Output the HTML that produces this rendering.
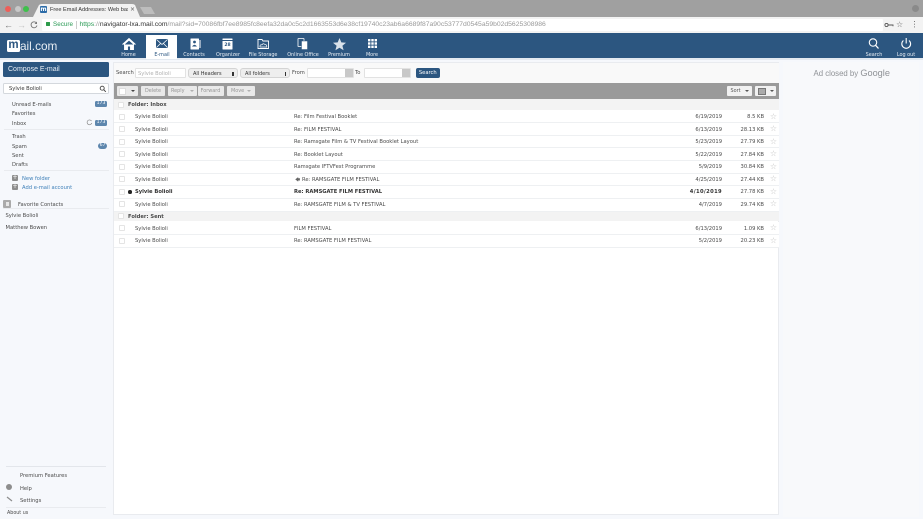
<!DOCTYPE html>
<html><head><meta charset="utf-8"><style>
html,body{margin:0;padding:0;width:923px;height:519px;overflow:hidden;background:#f6f8fc}
body{font-family:"DejaVu Sans","Liberation Sans",sans-serif;font-size:5.2px;color:#4a4a4a;position:relative}
#w{position:absolute;left:0;top:0;width:923px;height:519px;overflow:hidden;filter:blur(.35px)}
.a{position:absolute;white-space:nowrap}
.l{font-family:"Liberation Sans",sans-serif}
.nav{position:absolute;top:51.5px;width:50px;text-align:center;color:#e8eef4;font-size:4.9px;line-height:7px}
svg{position:absolute;overflow:visible}
.cb{position:absolute;width:6px;height:6px;box-sizing:border-box;border:1px solid #e4e4e4;border-radius:1px;background:#fff}
.row{position:absolute;left:114px;width:665px;background:#fff;border-bottom:1px solid #eef0f2}
.row span{position:absolute;white-space:nowrap;top:0}
.row span.s{right:2px;top:-1.5px;font-size:8px;font-weight:normal;color:#c4c4c4}
.fr{position:absolute;left:114px;width:665px;background:#f3f3f3;line-height:12px;font-weight:bold}
.btn{position:absolute;top:86px;height:10px;background:#e9e9e9;border-radius:1px;color:#969696;line-height:11px;text-align:center;font-size:4.9px}
.side{position:absolute;left:12px;white-space:nowrap;line-height:8px;margin-top:1px}
.badge{position:absolute;background:#5d86ad;color:#fff;border-radius:1.5px;height:6px;line-height:6.5px;font-size:4.6px;text-align:center;margin-top:.5px}
.sel{position:absolute;top:68px;height:10px;background:#eee;border:.6px solid #d4d4d4;border-radius:3px;line-height:11px;padding-left:4px;box-sizing:border-box;color:#333;font-size:5px}
.sel:after{content:"";position:absolute;right:3px;top:3px;width:1.5px;height:4px;background:#333}
.inp{position:absolute;background:#fff;border:.6px solid #e2e2e2;border-radius:1px;box-sizing:border-box}
</style></head><body><div id="w">
<div class="a" style="left:0;top:0;width:923px;height:17px;background:#a0a0a0"></div>
<div class="a" style="left:5px;top:6px;width:6px;height:6px;border-radius:50%;background:#ee5f59"></div>
<div class="a" style="left:15px;top:6px;width:6px;height:6px;border-radius:50%;background:#c8c8c8"></div>
<div class="a" style="left:23px;top:6px;width:6px;height:6px;border-radius:50%;background:#3fc04c"></div>
<svg style="left:0;top:0" width="923" height="18"><path d="M33 17 L39 5 Q40 4 42 4 L132 4 Q134 4 135 5 L140 17Z" fill="#f2f2f2"/><path d="M140 7 H151 L155 14 H144Z" fill="#bdbdbd"/></svg>
<div class="a" style="left:40px;top:6px;width:7px;height:7px;background:#2c6ca8;border-radius:1px;color:#fff;font-size:6px;line-height:7px;text-align:center;font-weight:bold">m</div>
<div class="a" style="left:50px;top:5px;width:78px;height:10px;overflow:hidden;line-height:10px;color:#333;font-size:5.6px;font-family:'Liberation Sans',sans-serif">Free Email Addresses: Web based</div>
<div class="a" style="left:130px;top:5px;line-height:10px;color:#555;font-size:6px">×</div>
<div class="a" style="left:912px;top:5px;width:7px;height:7px;border-radius:50%;background:#8a8a8a"></div>
<div class="a" style="left:0;top:17px;width:923px;height:16px;background:#f3f3f3"></div>
<div class="a l" style="left:4px;top:20px;font-size:9px;line-height:10px;color:#777">←</div>
<div class="a l" style="left:17px;top:20px;font-size:9px;line-height:10px;color:#c4c4c4">→</div>
<svg style="left:30px;top:21px" width="8" height="8"><path d="M6.5 2 A3 3 0 1 0 7 4.5" fill="none" stroke="#777" stroke-width=".9"/><path d="M7 .5V3H4.5Z" fill="#777"/></svg>
<div class="a" style="left:42px;top:19px;width:841px;height:12px;background:#fff;border-radius:1px"></div>
<div class="a" style="left:46px;top:22px;width:3.5px;height:4px;background:#2c9a4a;border-radius:.5px"></div>
<div class="a l" style="left:53px;top:19px;line-height:12.5px;font-size:6.3px;color:#2a9a55">Secure</div>
<div class="a" style="left:76px;top:21px;width:.7px;height:8px;background:#ccc"></div>
<div class="a l" style="left:79.5px;top:19px;line-height:12.5px;font-size:6.78px;color:#999"><span style="color:#2a9a55">https</span>://<span style="color:#333">navigator-lxa.mail.com</span>/mail?sid=70086fbf7ee8985fc8eefa32da0c5c2d1663553d6e38cf19740c23ab6a6689f87a90c53777d0545a59b02d5625308986</div>
<svg style="left:884px;top:21px" width="10" height="8"><circle cx="2.5" cy="4" r="1.6" fill="none" stroke="#555" stroke-width=".9"/><path d="M4 4H9V5.2" fill="none" stroke="#555" stroke-width=".9"/></svg>
<div class="a" style="left:896px;top:19px;font-size:8px;line-height:12px;color:#666">☆</div>
<div class="a" style="left:914px;top:21px;width:1.4px;height:1.4px;background:#777;box-shadow:0 2.7px #777,0 5.4px #777"></div>

<div class="a" style="left:0;top:33px;width:923px;height:25px;background:#2c5680"></div>
<div class="a" style="left:0;top:58px;width:923px;height:1.5px;background:#e3e9f0"></div>
<div class="a" style="left:7px;top:40px;width:13px;height:12px;background:#fff;border-radius:1.5px;color:#2c5680;font:bold 11.5px/10px 'Liberation Sans',sans-serif;text-align:center;overflow:hidden">m</div>
<div class="a l" style="left:20px;top:37.5px;font-size:11.8px;line-height:17px;color:#e8eef4">ail.com</div>
<div class="a" style="left:146px;top:35px;width:31px;height:24px;background:#fff"></div>
<svg style="left:0;top:0" width="923" height="60">
<path d="M122.5 44.5 L129 38.5 L135.5 44.5 M124.5 44 V49.5 H127.5 V46 H130.5 V49.5 H133.5 V44 L129 40Z" fill="#fff" stroke="#fff" stroke-width=".9"/>
<rect x="156" y="39" width="12" height="9" fill="#2c5680" rx=".6"/><path d="M156.5 39.5 L162 44.5 L167.5 39.5 M156.5 47.5 L160.5 43.5 M167.5 47.5 L163.5 43.5" stroke="#fff" stroke-width=".8" fill="none"/>
<rect x="190.5" y="38.5" width="8.5" height="11" fill="#fff" rx=".5"/><circle cx="194.5" cy="42" r="1.4" fill="#2c5680"/><path d="M192 46.5 Q194.5 43 197 46.5Z" fill="#2c5680"/><rect x="199.5" y="40" width="1" height="8" fill="#fff"/>
<rect x="222.5" y="38.5" width="10" height="11" fill="#fff" rx=".5"/><rect x="222.5" y="40" width="10" height="1" fill="#2c5680"/>
<path d="M258 39.5 H262 L263 41 H268.5 V48.5 H258Z" fill="none" stroke="#fff" stroke-width=".9"/><path d="M260 47 Q259.5 44.5 262 44.8 Q263 42.8 265 44.5 Q267 44.5 266.8 47Z" fill="none" stroke="#fff" stroke-width=".7"/>
<rect x="298" y="38.5" width="6" height="8" fill="none" stroke="#fff" stroke-width=".8" rx=".4"/><rect x="301.5" y="41" width="6" height="8.5" fill="#fff" stroke="#2c5680" stroke-width=".5" rx=".4"/>
<path d="M339.5 38 L341.3 42.4 L346 42.7 L342.4 45.7 L343.6 50.2 L339.5 47.7 L335.4 50.2 L336.6 45.7 L333 42.7 L337.7 42.4Z" fill="#d9e2eb"/>
<g fill="#fff"><rect x="368" y="39" width="2.4" height="2.4"/><rect x="371.3" y="39" width="2.4" height="2.4"/><rect x="374.6" y="39" width="2.4" height="2.4"/><rect x="368" y="42.3" width="2.4" height="2.4"/><rect x="371.3" y="42.3" width="2.4" height="2.4"/><rect x="374.6" y="42.3" width="2.4" height="2.4"/><rect x="368" y="45.6" width="2.4" height="2.4"/><rect x="371.3" y="45.6" width="2.4" height="2.4"/><rect x="374.6" y="45.6" width="2.4" height="2.4"/></g>
<circle cx="873" cy="42.5" r="3.7" fill="none" stroke="#fff" stroke-width="1.1"/><path d="M875.5 45.2 L878.5 48.5" stroke="#fff" stroke-width="1.3"/>
<path d="M903.4 40.5 A4.4 4.4 0 1 0 909 40.5 M906.2 38 V43.5" fill="none" stroke="#fff" stroke-width="1.1"/>
</svg>
<div class="a" style="left:222.5px;top:42.5px;width:10px;text-align:center;color:#2c5680;font-size:4.5px;line-height:6px;font-weight:bold">28</div>
<div class="nav" style="left:103.5px">Home</div>
<div class="nav" style="left:137px;color:#2c5680">E-mail</div>
<div class="nav" style="left:169px">Contacts</div>
<div class="nav" style="left:203px">Organizer</div>
<div class="nav" style="left:238px">File Storage</div>
<div class="nav" style="left:278px">Online Office</div>
<div class="nav" style="left:314px">Premium</div>
<div class="nav" style="left:347px">More</div>
<div class="nav" style="left:849px">Search</div>
<div class="nav" style="left:881px">Log out</div>

<!-- Sidebar -->
<div class="a" style="left:3px;top:62px;width:106px;height:15px;background:#2c5680;border-radius:1.5px;color:#e8eef4;font-size:7px;line-height:15.5px;text-indent:5px;font-family:'Liberation Sans',sans-serif">Compose E-mail</div>
<div class="a" style="left:3px;top:83px;width:106px;height:11px;background:#fff;border:.6px solid #d4d8dd;border-radius:1.5px;box-sizing:border-box;line-height:11px;text-indent:5px;color:#333">Sylvie Bolioli</div>
<svg style="left:99px;top:85px" width="8" height="8"><circle cx="3.2" cy="3.2" r="2" fill="none" stroke="#444" stroke-width=".9"/><path d="M4.7 4.7 L6.8 6.8" stroke="#444" stroke-width="1"/></svg>
<div class="side" style="top:100px">Unread E-mails</div>
<div class="badge" style="left:95px;top:100.5px;width:12px">173</div>
<div class="side" style="top:109px">Favorites</div>
<div class="side" style="top:118.5px">Inbox</div>
<svg style="left:86px;top:119px" width="7" height="7"><path d="M5.5 2 A2.4 2.4 0 1 0 5.8 4" fill="none" stroke="#888" stroke-width=".7"/></svg>
<div class="badge" style="left:95px;top:119.5px;width:12px">173</div>
<div class="a" style="left:4px;top:129px;width:105px;height:1px;background:#e9ebef"></div>
<div class="side" style="top:132px">Trash</div>
<div class="side" style="top:141.5px">Spam</div>
<div class="badge" style="left:98px;top:142px;width:9px;border-radius:3px">67</div>
<div class="side" style="top:151px">Sent</div>
<div class="side" style="top:160px">Drafts</div>
<div class="a" style="left:4px;top:170px;width:105px;height:1px;background:#e9ebef"></div>
<div class="a" style="left:12px;top:175px;width:6px;height:6px;background:#8d8d8d;border-radius:1px;color:#fff;font-size:6px;line-height:6px;text-align:center">+</div>
<div class="side" style="left:22px;top:174px;color:#3d7fb8">New folder</div>
<div class="a" style="left:12px;top:184px;width:6px;height:6px;background:#8d8d8d;border-radius:1px;color:#fff;font-size:6px;line-height:6px;text-align:center">+</div>
<div class="side" style="left:22px;top:183px;color:#3d7fb8">Add e-mail account</div>
<div class="a" style="left:3px;top:200px;width:8px;height:8px;background:#aaa;border-radius:1px"></div>
<div class="a" style="left:5.5px;top:202px;width:3px;height:3.5px;background:#e6e6e6"></div>
<div class="side" style="left:18px;top:200px">Favorite Contacts</div>
<div class="a" style="left:3px;top:208px;width:106px;height:1px;background:#e9ebef"></div>
<div class="side" style="left:5.5px;top:210.5px">Sylvie Bolioli</div>
<div class="side" style="left:5.5px;top:222.5px">Matthew Bowen</div>
<div class="a" style="left:6px;top:466px;width:100px;height:1px;background:#e3e6eb"></div>
<div class="side" style="left:20px;top:471px">Premium Features</div>
<div class="a" style="left:6px;top:484px;width:6px;height:6px;background:#8d8d8d;border-radius:50%"></div>
<div class="side" style="left:20px;top:483.5px">Help</div>
<svg style="left:6px;top:496px" width="7" height="6"><path d="M1 1 L6 5" stroke="#8d8d8d" stroke-width="1.2"/></svg>
<div class="side" style="left:20px;top:495.5px">Settings</div>
<div class="a" style="left:6px;top:507px;width:100px;height:1px;background:#e9ebef"></div>
<div class="side" style="left:7px;top:508.5px;font-size:4.8px">About us</div>

<!-- Main -->
<div class="a" style="left:113px;top:62px;width:666px;height:453px;background:#fff;border:.6px solid #e9ebef;box-sizing:border-box"></div>
<div class="a" style="left:114px;top:63px;width:665px;height:20px;background:#f9f9f9"></div>
<div class="a" style="left:116px;top:68.5px;line-height:9px">Search</div>
<div class="inp" style="left:135px;top:68px;width:51px;height:10px;line-height:10px;text-indent:2px;color:#b0b0b0">Sylvie Bolioli</div>
<div class="sel" style="left:188px;width:49.5px">All Headers</div>
<div class="sel" style="left:240px;width:50px">All folders</div>
<div class="a" style="left:292px;top:68.5px;line-height:9px">From</div>
<div class="inp" style="left:307px;top:68px;width:47px;height:10px"></div>
<div class="a" style="left:345px;top:69px;width:8px;height:8px;background:#c8c8c8"></div>
<div class="a" style="left:355px;top:68.5px;line-height:9px">To</div>
<div class="inp" style="left:364px;top:68px;width:47px;height:10px"></div>
<div class="a" style="left:402px;top:69px;width:8px;height:8px;background:#c8c8c8"></div>
<div class="a" style="left:416px;top:67.5px;width:23.5px;height:10.5px;background:#2c5680;border-radius:2px;color:#fff;text-align:center;line-height:11px">Search</div>

<div class="a" style="left:114px;top:83px;width:665px;height:16px;background:#9a9a9a"></div>
<div class="btn" style="left:117px;width:21px"></div>
<div class="a" style="left:119px;top:87.5px;width:7px;height:7px;background:#fff;border:.6px solid #ddd;box-sizing:border-box"></div>
<div class="a" style="left:131px;top:90px;border:2px solid transparent;border-top:2.5px solid #444;border-bottom:0"></div>
<div class="btn" style="left:141px;width:24px">Delete</div>
<div class="btn" style="left:168px;width:29px;text-align:left;text-indent:3px">Reply</div>
<div class="a" style="left:190px;top:90px;border:2px solid transparent;border-top:2.5px solid #b0b0b0;border-bottom:0"></div>
<div class="btn" style="left:197.5px;width:26px">Forward</div>
<div class="btn" style="left:227px;width:28px;text-align:left;text-indent:4px">Move</div>
<div class="a" style="left:247px;top:90px;border:2px solid transparent;border-top:2.5px solid #b0b0b0;border-bottom:0"></div>
<div class="btn" style="left:727px;width:24.5px;background:#f1f1f1;color:#555;text-align:left;text-indent:3.5px">Sort</div>
<div class="a" style="left:745px;top:90px;border:2px solid transparent;border-top:2.5px solid #555;border-bottom:0"></div>
<div class="btn" style="left:755px;width:21px;background:#f1f1f1"></div>
<div class="a" style="left:758px;top:87.5px;width:8px;height:7px;background:#aaa;border:.6px solid #777;box-sizing:border-box"></div>
<div class="a" style="left:770px;top:90px;border:2px solid transparent;border-top:2.5px solid #555;border-bottom:0"></div>

<div class="fr" style="top:99px;height:11px"><span class="a" style="left:14px">Folder: Inbox</span></div><div class="cb" style="left:118px;top:101.5px"></div>

<div class="row" style="top:110px;height:12px;line-height:15px"><span style="left:21px">Sylvie Bolioli</span><span style="left:180px">Re: Film Festival Booklet</span><span style="right:57px">6/19/2019</span><span style="right:15px">8.5 KB</span><span class="s">☆</span></div><div class="cb" style="left:119px;top:113.5px"></div>
<div class="row" style="top:123px;height:12px;line-height:14px"><span style="left:21px">Sylvie Bolioli</span><span style="left:180px">Re: FILM FESTIVAL</span><span style="right:57px">6/13/2019</span><span style="right:15px">28.13 KB</span><span class="s">☆</span></div><div class="cb" style="left:119px;top:126px"></div>
<div class="row" style="top:136px;height:11px;line-height:13px"><span style="left:21px">Sylvie Bolioli</span><span style="left:180px">Re: Ramsgate Film &amp; TV Festival Booklet Layout</span><span style="right:57px">5/23/2019</span><span style="right:15px">27.79 KB</span><span class="s">☆</span></div><div class="cb" style="left:119px;top:138.5px"></div>
<div class="row" style="top:148px;height:12px;line-height:14px"><span style="left:21px">Sylvie Bolioli</span><span style="left:180px">Re: Booklet Layout</span><span style="right:57px">5/22/2019</span><span style="right:15px">27.84 KB</span><span class="s">☆</span></div><div class="cb" style="left:119px;top:151px"></div>
<div class="row" style="top:161px;height:12px;line-height:13px"><span style="left:21px">Sylvie Bolioli</span><span style="left:180px">Ramsgate IFTVFest Programme</span><span style="right:57px">5/9/2019</span><span style="right:15px">30.84 KB</span><span class="s">☆</span></div><div class="cb" style="left:119px;top:163.5px"></div>
<div class="row" style="top:174px;height:11px;line-height:12px"><span style="left:21px">Sylvie Bolioli</span><span style="left:181px;color:#666">🡄</span><span style="left:188px">Re: RAMSGATE FILM FESTIVAL</span><span style="right:57px">4/25/2019</span><span style="right:15px">27.44 KB</span><span class="s">☆</span></div><div class="cb" style="left:119px;top:176px"></div>
<div class="row" style="top:186px;height:12px;line-height:13px;font-weight:bold;color:#333"><span style="left:21px">Sylvie Bolioli</span><span style="left:180px">Re: RAMSGATE FILM FESTIVAL</span><span style="right:57px;letter-spacing:.35px">4/10/2019</span><span style="right:15px;font-weight:normal;color:#4a4a4a">27.78 KB</span><span class="s">☆</span></div><div class="cb" style="left:119px;top:188.5px"></div><div class="a" style="left:128px;top:190px;width:3.5px;height:3.5px;border-radius:50%;background:#222"></div>
<div class="row" style="top:199px;height:12px;line-height:12px"><span style="left:21px">Sylvie Bolioli</span><span style="left:180px">Re: RAMSGATE FILM &amp; TV FESTIVAL</span><span style="right:57px">4/7/2019</span><span style="right:15px">29.74 KB</span><span class="s">☆</span></div><div class="cb" style="left:119px;top:201px"></div>

<div class="fr" style="top:212px;height:9px;line-height:10px"><span class="a" style="left:14px">Folder: Sent</span></div><div class="cb" style="left:118px;top:213px"></div>

<div class="row" style="top:222px;height:12px;line-height:14px"><span style="left:21px">Sylvie Bolioli</span><span style="left:180px">FILM FESTIVAL</span><span style="right:57px">6/13/2019</span><span style="right:15px">1.09 KB</span><span class="s">☆</span></div><div class="cb" style="left:119px;top:225px"></div>
<div class="row" style="top:235px;height:12px;line-height:13px"><span style="left:21px">Sylvie Bolioli</span><span style="left:180px">Re: RAMSGATE FILM FESTIVAL</span><span style="right:57px">5/2/2019</span><span style="right:15px">20.23 KB</span><span class="s">☆</span></div><div class="cb" style="left:119px;top:237.5px"></div>

<!-- Ad -->
<div class="a" style="left:783px;top:62px;width:136px;height:455px;background:#f8f9fb"></div>
<div class="a l" style="left:813.5px;top:68px;font-size:7.8px;line-height:11px;color:#8f9296">Ad closed by <span style="font-size:9.2px">Google</span></div>
</div></body></html>
